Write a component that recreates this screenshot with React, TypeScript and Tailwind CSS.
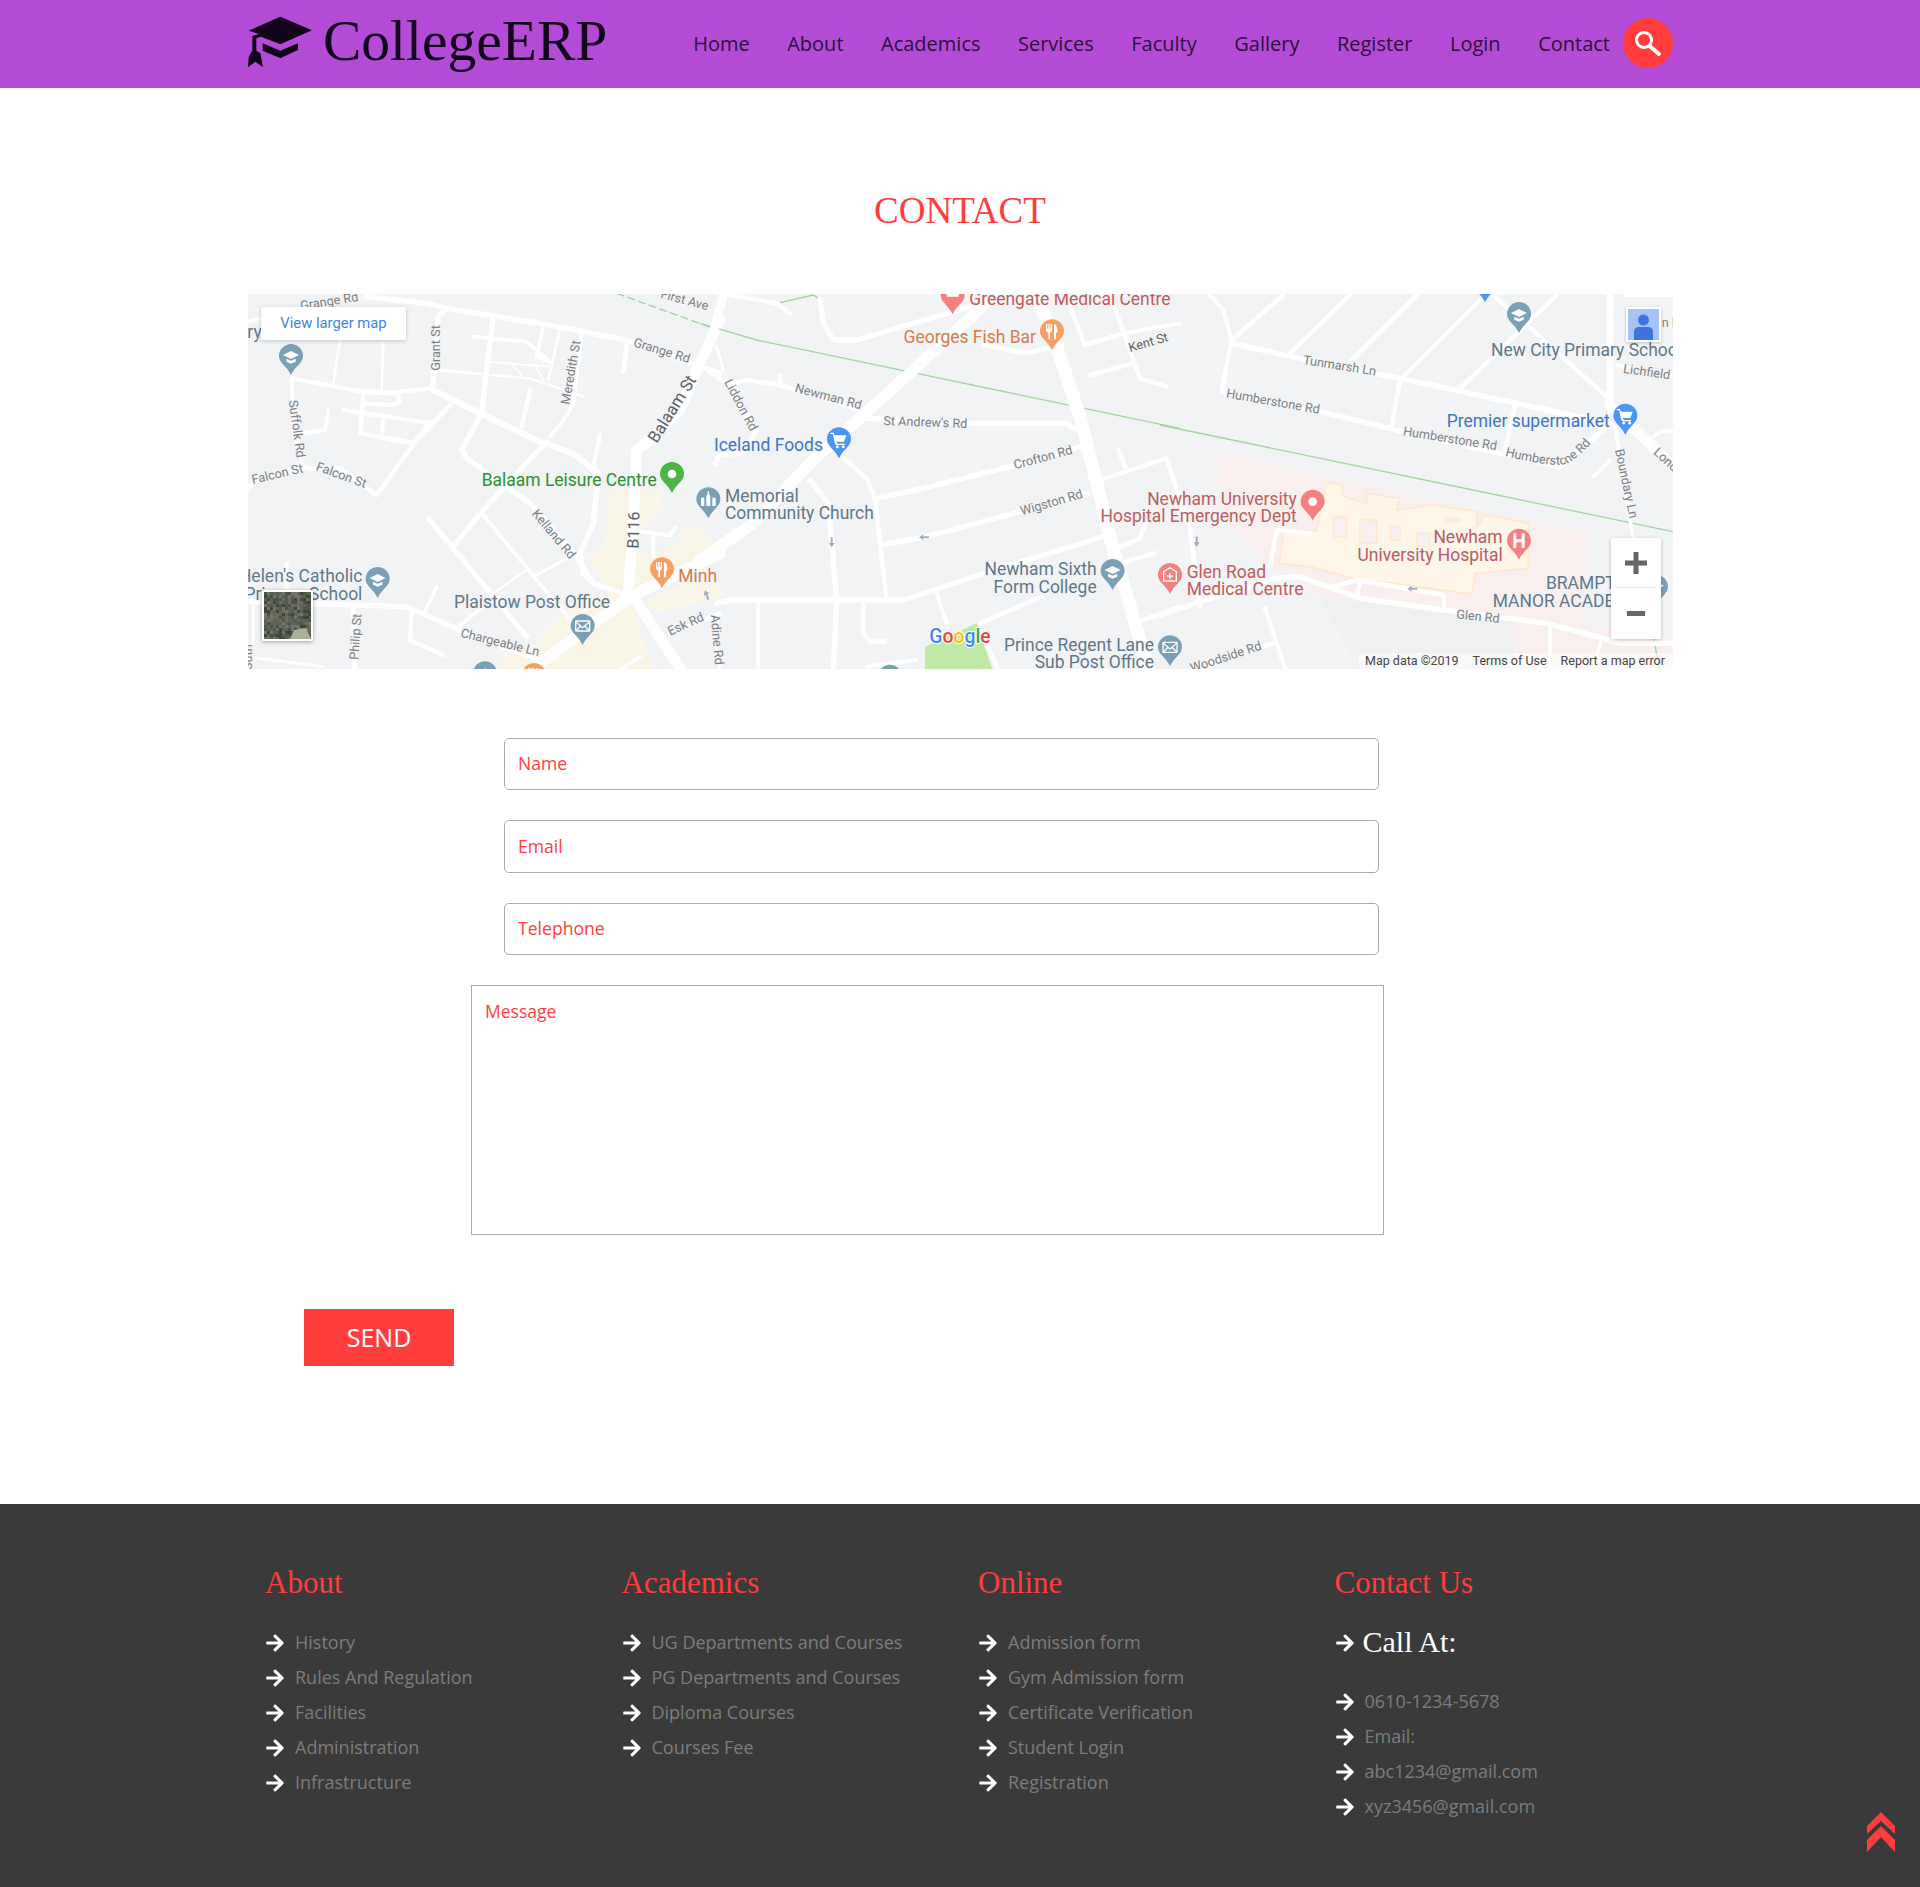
import React from "react";
import { FaArrowRight } from "react-icons/fa";

const SERIF = "font-['Liberation_Serif',serif]";

function Road({ w = 14, pts }: { w?: number; pts: string }) {
  return <polyline points={pts} fill="none" stroke="#ffffff" strokeWidth={w * 1.15} strokeLinecap="round" strokeLinejoin="round" />;
}

const C = { gray: "#5f7889", blue: "#3e76c6", green: "#2f8f2f", orange: "#d97b49", red: "#bf5c5c", road: "#7c7f83", dark: "#5c6066" };

function T({ x, y, s = 52.4, c = C.gray, r = 0, a = "start", ls = 0, children }: { x: number; y: number; s?: number; c?: string; r?: number; a?: "start" | "end"; ls?: number; children: React.ReactNode }) {
  return (
    <text x={x} y={y} fontSize={s} fill={c} textAnchor={a} letterSpacing={ls} fontFamily="Roboto, sans-serif" stroke="#f3f4f5" strokeWidth={5} paintOrder="stroke" transform={r ? `rotate(${r} ${x} ${y})` : undefined}>
      {children}
    </text>
  );
}

function Pin({ x, y, c, icon }: { x: number; y: number; c: string; icon: string }) {
  return (
    <g transform={`translate(${x} ${y})`}>
      <path d="M-36 0a36 36 0 0 1 72 0c0 22-24 30-36 57c-12-27-36-35-36-57z" fill={c} />
      {icon === "school" && <path d="M-24-3L0-15L24-3L0 9zM-14 8L0 14L14 8V17L0 23L-14 17z" fill="#fff" />}
      {icon === "dot" && <circle r="13" fill="#fff" />}
      {icon === "mail" && <g fill="none" stroke="#fff" strokeWidth="4"><rect x="-21" y="-15" width="42" height="30" rx="2" /><path d="M-21-13L0 5L21-13M-21 15L-6 0M21 15L6 0" /></g>}
      {icon === "church" && <path d="M-6-8a6 8 0 0 1 12 0V20H-6zM-22 0a5 6 0 0 1 10 0V20H-22zM12 0a5 6 0 0 1 10 0V20H12zM-2-24H2V-14H-2z" fill="#fff" />}
      {icon === "fork" && <path d="M-18-22H-14V-8H-11V-22H-7V-8H-4V-22H0V-4C0 1-4 3-6 4V24H-11V4C-14 3-18 1-18-4zM6-22C14-20 17-10 16 4H12V24H6z" fill="#fff" />}
      {icon === "cart" && <g fill="#fff"><path d="M-26-20H-16L-13-12H22L15 7H-8L-5 13H17V17H-9L-14 7L-18-16H-26z" /><circle cx="-5" cy="22" r="4.5" /><circle cx="13" cy="22" r="4.5" /></g>}
      {icon === "h" && <path d="M-17-22H-8V-4H8V-22H17V22H8V5H-8V22H-17z" fill="#fff" />}
      {icon === "house" && <g fill="none" stroke="#fff" strokeWidth="4"><path d="M-19-10L0-22L19-10V18H-19z" /><path d="M0-6V12M-9 3H9" /></g>}
      {icon === "house-top" && <path d="M-18 4V-14H-10V-20H10V-14H18V4zM-4-14V-4H4V-14z" fill="#fff" />}
    </g>
  );
}

function Arrow({ x, y, r }: { x: number; y: number; r: number }) {
  return <path transform={`translate(${x} ${y}) rotate(${r})`} d="M0-15L9-2H3V15H-3V-2H-9z" fill="#a3acc0" />;
}

function MapDrawing() {
  const G = { p: "#4b95f3", o: "#f8a062", g: "#7aa0b5", r: "#f67f80", gr: "#4db546" };
  return (
    <svg viewBox="248 294 1425 375" className="block h-[375px] w-[1425px]">
      <rect x="248" y="294" width="1425" height="375" fill="#f2f3f5" />

      <g transform="translate(240 290) scale(0.33333)">
        <g fill="#f9f5e7">
          <path d="M1120 600H1265V650L1200 720V880L1110 900L1035 800L1090 775L1105 690L1090 680z" />
          <path d="M1310 730L1370 705L1440 800L1180 890V800L1320 760z" />
          <path d="M1215 930L1400 860L1440 880V920L1240 970z" />
          <path d="M1000 940L1140 900L1180 950L1240 1140H780L790 1090L880 1060z" />
        </g>
        <path d="M1130 10L1420 115" fill="none" stroke="#9bd49b" strokeWidth="4" strokeDasharray="24 10" />
        <Road w={14} pts="380,20 560,40 620,55 900,100 1160,150 1440,250" />
        <Road w={10} pts="0,100 60,85" />
        <Road w={14} pts="620,55 595,80 578,295" />
        <Road w={16} pts="578,300 720,370 900,455 1000,490 1075,550" />
        <Road w={12} pts="155,265 370,305 470,310 480,335 460,345 370,340" />
        <Road w={12} pts="480,305 578,295" />
        <Road w={12} pts="155,265 160,420 190,530" />
        <Road w={12} pts="20,600 60,560 190,535 300,535 410,615 570,395" />
        <Road w={12} pts="310,360 570,400" />
        <Road w={10} pts="265,360 255,420 190,430" />
        <Road w={12} pts="370,310 360,430 520,460 635,340" />
        <Road w={10} pts="430,390 425,435" />
        <Road w={14} pts="760,80 735,280 725,370 665,480 680,505 800,590 870,640 1010,800 1060,880 1170,920" />
        <Road w={14} pts="920,455 730,660 640,770" />
        <Road w={14} pts="565,685 860,1040" />
        <Road w={10} pts="730,675 890,870 1000,1000" />
        <Road w={8} pts="880,860 1010,790" />
        <Road w={6} pts="860,840 760,910" />
        <Road w={7} pts="300,150 280,280" />
        <Road w={7} pts="430,160 425,300" />
        <Road w={10} pts="700,140 860,155 930,215 890,200 910,110" />
        <Road w={7} pts="960,115 925,270" />
        <Road w={5} pts="740,215 930,230" />
        <Road w={6} pts="590,240 870,265 1030,320" />
        <Road w={5} pts="820,225 850,265" />
        <Road w={5} pts="885,225 910,270" />
        <Road w={10} pts="1025,125 1000,340 975,385 930,440" />
        <Road w={12} pts="870,300 845,410" />
        <Road w={12} pts="1080,435 1060,530" />
        <Road w={12} pts="1160,165 1150,245" />
        <Road w={14} pts="1075,550 1060,700 1020,790 1030,850 1060,880" />
        <Road w={28} pts="1440,90 1370,240 1320,360 1230,450 1190,480 1180,700 1165,900" />
        <Road w={30} pts="860,1150 1170,920 1440,790" />
        <Road w={28} pts="1180,920 1330,1150" />
        <Road w={14} pts="30,935 500,950 680,1030 900,1110" />
        <Road w={12} pts="515,970 510,1050 610,1095" />
        <Road w={10} pts="590,890 555,965" />
        <Road w={10} pts="660,1005 730,950" />
        <Road w={12} pts="340,950 345,1150" />
        <Road w={12} pts="1290,1030 1440,970" />
        <Road w={12} pts="1200,725 1290,735 1305,715" />
        <Road w={10} pts="1240,735 1240,800" />
        <Road w={8} pts="20,1100 250,1130" />
        <Road w={8} pts="40,950 40,1060" />
        <Road w={10} pts="140,820 140,900" />
        <Road w={8} pts="1420,1020 1440,1140" />
        <Road w={10} pts="1125,1150 1200,1100" />
      </g>

      <g transform="translate(700 290) scale(0.33333)">
        <path d="M675 1070L830 1000L880 1145H675z" fill="#bfe8a9" />
        <polyline points="0,100 170,150 1440,415" fill="none" stroke="#a0d69c" strokeWidth="4" />
        <polyline points="240,38 340,15 355,25" fill="none" stroke="#a0d69c" strokeWidth="4" />
        <Road w={12} pts="90,15 230,40 270,70" />
        <Road w={14} pts="360,30 370,100 400,150 470,150 810,50" />
        <Road w={24} pts="70,15 40,130 0,220" />
        <Road w={8} pts="50,170 70,240" />
        <Road w={12} pts="0,225 80,280 170,420 130,490 60,495 45,520" />
        <Road w={12} pts="100,280 140,270 240,285 480,360" />
        <Road w={12} pts="240,255 240,285" />
        <Road w={14} pts="500,385 800,400 1100,400 1120,415" />
        <Road w={30} pts="0,810 160,700 340,510 640,240 880,20" />
        <Road w={34} pts="1010,15 1070,170 1140,380 1240,780 1350,1150" />
        <Road w={12} pts="850,165 980,190 1060,170" />
        <Road w={12} pts="1110,50 1155,165 1270,130" />
        <Road w={12} pts="1240,40 1320,265 1400,290" />
        <Road w={12} pts="1170,255 1300,220" />
        <Road w={10} pts="1270,130 1440,100" />
        <Road w={12} pts="430,505 500,565 525,625 560,930" />
        <Road w={14} pts="525,625 650,600 950,525 1140,470" />
        <Road w={14} pts="545,765 680,740 960,665 1165,610" />
        <Road w={14} pts="330,570 385,640 410,930 400,1150" />
        <Road w={14} pts="50,940 100,930 610,930 850,850 1210,740" />
        <Road w={12} pts="1200,570 1400,505 1470,720 1500,950" />
        <Road w={12} pts="1255,480 1275,530" />
        <Road w={12} pts="1250,775 1320,745 1335,700" />
        <Road w={12} pts="1260,820 1365,790" />
        <Road w={10} pts="175,940 175,1150" />
        <Road w={12} pts="490,940 490,1030 510,1055 555,1055" />
        <Road w={10} pts="710,910 740,1000" />
        <Road w={12} pts="840,1000 1025,920" />
        <Road w={12} pts="850,1040 900,1150" />
        <Road w={10} pts="500,1130 650,1110" />
        <Road w={12} pts="1330,990 1440,950" />
      </g>

      <g transform="translate(1160 290) scale(0.33333)">
        <path d="M165 485L1290 735L1265 1000L1540 1060V1145H1070L1060 990L480 920L340 830L200 700z" fill="#f9efee" />
        <path d="M480 920L1060 990L1065 1145H600z" fill="#eff1f0" />
        <path d="M500 578L545 585L550 620L620 640V610L720 625L710 660L815 645L950 665V710L975 675L1105 700V835L945 850L935 912L700 880L600 870L450 830L358 820L372 720L470 722z" fill="#fff6ea" stroke="#ffe8cc" strokeWidth="5" />
        <g fill="#f9efee" stroke="#ffe8cc" strokeWidth="4">
          <path d="M520 680h40v60h-40zM600 690h50v70h-50zM690 710h30v40h-30zM770 730h40v40h-40zM860 685h40v10h-40z" />
        </g>
        <polyline points="0,405 1540,725" fill="none" stroke="#a0d69c" strokeWidth="4" />
        <polyline points="1480,1040 1500,1145" fill="none" stroke="#a0d69c" strokeWidth="4" />
        <Road w={12} pts="150,15 190,60 215,150 185,300 200,310" />
        <Road w={14} pts="215,160 440,210 720,265 1350,400" />
        <Road w={14} pts="190,305 480,365 730,425 1020,490 1200,530 1340,410" />
        <Road w={12} pts="370,15 215,150" />
        <Road w={12} pts="570,15 390,190" />
        <Road w={12} pts="770,15 570,215" />
        <Road w={12} pts="975,15 725,265" />
        <Road w={12} pts="720,270 695,405" />
        <Road w={12} pts="1065,350 1035,480" />
        <Road w={12} pts="1190,15 900,295" />
        <Road w={12} pts="1000,15 1340,320" />
        <Road w={18} pts="1350,15 1350,345" />
        <Road w={28} pts="1350,345 1550,540" />
        <Road w={10} pts="1365,410 1420,750" />
        <Road w={10} pts="1300,560 1350,510" />
        <Road w={10} pts="1480,440 1500,425 1545,420" />
        <Road w={14} pts="0,975 340,865 420,860 600,925 850,960 1160,1000 1310,1040 1380,1060 1540,1060" />
        <Road w={12} pts="350,720 330,830" />
        <Road w={12} pts="350,720 450,730" />
        <Road w={10} pts="600,880 590,920" />
        <Road w={12} pts="520,890 590,870 850,915 855,960" />
        <Road w={10} pts="1170,1010 1170,1150" />
        <Road w={10} pts="1325,1040 1300,1150" />
        <Road w={12} pts="315,955 380,1150" />
        <Road w={12} pts="95,1140 340,1060" />
        <Road w={10} pts="1400,15 1540,15" />
        <Road w={10} pts="1370,225 1540,260" />
        <path id="humb" d="M1035 497Q1180 535 1225 520Q1270 490 1300 450" fill="none" />
      </g>

      <g transform="translate(240 290) scale(0.33333)">
        <T x={183} y={60} s={38} c={C.road} r={-9}>Grange Rd</T>
        <T x={22} y={143}>ry</T>
        <T x={600} y={242} s={38} c={C.road} r={-90}>Grant St</T>
        <T x={988} y={345} s={38} c={C.road} r={-80}>Meredith St</T>
        <T x={1178} y={168} s={38} c={C.road} r={17}>Grange Rd</T>
        <T x={1250} y={462} s={50} c={C.dark} r={-58}>Balaam St</T>
        <T x={146} y={332} s={38} c={C.road} r={82}>Suffolk Rd</T>
        <T x={38} y={582} s={38} c={C.road} r={-13}>Falcon St</T>
        <T x={226} y={540} s={38} c={C.road} r={20}>Falcon St</T>
        <T x={874} y={672} s={38} c={C.road} r={50}>Kelland Rd</T>
        <T x={1195} y={776} s={48} c={C.dark} r={-88}>B116</T>
        <T x={660} y={1040} s={38} c={C.road} r={14}>Chargeable Ln</T>
        <T x={355} y={1110} s={38} c={C.road} r={-86}>Philip St</T>
        <T x={35} y={1140} s={38} c={C.road} r={-90}>Suth</T>
        <T x={1290} y={1037} s={38} c={C.road} r={-24}>Esk Rd</T>
        <T x={1412} y={975} s={38} c={C.road} r={85}>Adine Rd</T>
        <T x={1260} y={23} s={38} c={C.road} r={15}>First Ave</T>
        <T x={725} y={589} c={C.green}>Balaam Leisure Centre</T>
        <T x={1315} y={875} c={C.orange}>Minh</T>
        <T x={642} y={953}>Plaistow Post Office</T>
        <T x={367} y={877} a="end">Helen's Catholic</T>
        <T x={367} y={930} a="end">Primary School</T>
        <Pin x={153} y={198} c={G.g} icon="school" />
        <Pin x={1296} y={552} c={G.gr} icon="dot" />
        <Pin x={1405} y={628} c={G.g} icon="church" />
        <Pin x={1266} y={838} c={G.o} icon="fork" />
        <Pin x={1028} y={1008} c={G.g} icon="mail" />
        <Pin x={413} y={867} c={G.g} icon="school" />
        <Pin x={735} y={1150} c={G.g} icon="school" />
        <Pin x={882} y={1155} c={G.o} icon="fork" />
        <Arrow x={1400} y={915} r={-20} />
      </g>

      <g transform="translate(700 290) scale(0.33333)">
        <T x={808} y={46} c={C.red}>Greengate Medical Centre</T>
        <T x={1008} y={160} a="end" c={C.orange}>Georges Fish Bar</T>
        <T x={1290} y={186} s={38} c="#62625a" r={-16}>Kent St</T>
        <T x={283} y={305} s={38} c={C.road} r={15}>Newman Rd</T>
        <T x={72} y={276} s={38} c={C.road} r={62}>Liddon Rd</T>
        <T x={550} y={405} s={38} c={C.road} r={2}>St Andrew's Rd</T>
        <T x={42} y={484} c={C.blue}>Iceland Foods</T>
        <T x={75} y={636}>Memorial</T>
        <T x={75} y={688}>Community Church</T>
        <T x={945} y={538} s={38} c={C.road} r={-15}>Crofton Rd</T>
        <T x={965} y={676} s={38} c={C.road} r={-16}>Wigston Rd</T>
        <T x={1190} y={855} a="end">Newham Sixth</T>
        <T x={1190} y={908} a="end">Form College</T>
        <T x={1362} y={1083} a="end">Prince Regent Lane</T>
        <T x={1362} y={1135} a="end">Sub Post Office</T>
        <Pin x={758} y={16} c={G.r} icon="house-top" />
        <Pin x={1056} y={124} c={G.o} icon="fork" />
        <Pin x={417} y={448} c={G.p} icon="cart" />
        <Pin x={1238} y={843} c={G.g} icon="school" />
        <Pin x={1410} y={1072} c={G.g} icon="mail" />
        <Pin x={1410} y={855} c={G.r} icon="house" />
        <Pin x={570} y={1160} c={G.g} icon="school" />
        <Arrow x={395} y={757} r={180} />
        <Arrow x={672} y={742} r={-90} />
        <text x={688} y={1060} fontSize={58} fontFamily="Roboto, sans-serif" fontWeight={500} stroke="#fff" strokeWidth={6} paintOrder="stroke">
          <tspan fill="#4285f4">G</tspan><tspan fill="#ea4335">o</tspan><tspan fill="#fbbc05">o</tspan><tspan fill="#4285f4">g</tspan><tspan fill="#34a853">l</tspan><tspan fill="#ea4335">e</tspan>
        </text>
      </g>

      <g transform="translate(1160 290) scale(0.33333)">
        <T x={993} y={198}>New City Primary School</T>
        <T x={1388} y={248} s={38} c={C.road} r={8}>Lichfield Rd</T>
        <T x={1505} y={110} s={38} c={C.road}>n Rd</T>
        <T x={428} y={222} s={38} c={C.road} r={9}>Tunmarsh Ln</T>
        <T x={197} y={322} s={38} c={C.road} r={10}>Humberstone Rd</T>
        <T x={728} y={436} s={38} c={C.road} r={9}>Humberstone Rd</T>
        <text fontSize={38} fill={C.road} fontFamily="Roboto, sans-serif" stroke="#f3f4f5" strokeWidth={5} paintOrder="stroke"><textPath href="#humb">Humberstone Rd</textPath></text>
        <T x={1365} y={480} s={38} c={C.road} r={78}>Boundary Ln</T>
        <T x={1478} y={490} s={38} c={C.road} r={42}>London Rd</T>
        <T x={860} y={411} c={C.blue}>Premier supermarket</T>
        <T x={410} y={645} a="end" c={C.red}>Newham University</T>
        <T x={410} y={697} a="end" c={C.red}>Hospital Emergency Dept</T>
        <T x={1028} y={760} a="end" c={C.red}>Newham</T>
        <T x={1028} y={814} a="end" c={C.red}>University Hospital</T>
        <T x={80} y={864} c={C.red}>Glen Road</T>
        <T x={80} y={916} c={C.red}>Medical Centre</T>
        <T x={1158} y={898}>BRAMPTON</T>
        <T x={998} y={950}>MANOR ACADEMY</T>
        <T x={888} y={985} s={38} c={C.road} r={6}>Glen Rd</T>
        <T x={95} y={1147} s={38} c={C.road} r={-18}>Woodside Rd</T>
        <Pin x={975} y={-20} c={G.p} icon="cart" />
        <Pin x={1077} y={72} c={G.g} icon="school" />
        <Pin x={1396} y={377} c={G.p} icon="cart" />
        <Pin x={458} y={635} c={G.r} icon="dot" />
        <Pin x={1077} y={752} c={G.r} icon="h" />
        <Pin x={1488} y={890} c={G.g} icon="school" />
        <Arrow x={110} y={755} r={180} />
        <Arrow x={757} y={896} r={-90} />
      </g>
    </svg>
  );
}

function Satellite() {
  const cells: React.ReactNode[] = [];
  const pal = ["#4a5247", "#5f6557", "#54584f", "#6d6e60", "#3d463c", "#7a7468", "#5a6352"];
  for (let y = 0; y < 16; y++) {
    for (let x = 0; x < 16; x++) {
      const i = Math.abs(Math.floor(Math.sin(x * 12.9 + y * 78.2) * 1000)) % pal.length;
      cells.push(<rect key={`${x}-${y}`} x={x * 3} y={y * 3} width="3" height="3" fill={pal[i]} />);
    }
  }
  return (
    <svg viewBox="0 0 47 47" className="block h-[47px] w-[47px]">
      {cells}
      <path d="M26 47L30 38L42 36L47 47z" fill="#a8b09a" />
    </svg>
  );
}

function GoogleMap() {
  return (
    <div className="relative h-[375px] w-[1425px] overflow-hidden">
      <MapDrawing />
      <div className="absolute left-[13px] top-[13px] flex h-[33px] w-[145px] items-center justify-center rounded-[2px] bg-white font-['Roboto',sans-serif] text-[14.8px] text-[#3f85e8] shadow-[0_1px_4px_rgba(0,0,0,0.2)]">View larger map</div>
      <div className="absolute left-[14px] top-[296px] rounded-[2px] border-2 border-white shadow-[0_1px_4px_rgba(0,0,0,0.35)]"><Satellite /></div>
      <div className="absolute left-[1378px] top-[13px] h-[35px] w-[35px] border-2 border-white bg-[#a6c3f5] shadow-[0_1px_3px_rgba(0,0,0,0.2)]">
        <svg viewBox="0 0 31 31" className="block h-[31px] w-[31px]">
          <circle cx="15.5" cy="11" r="5.5" fill="#3f74df" />
          <path d="M6 31V23Q6 18 11 18H20Q25 18 25 23V31z" fill="#3f74df" />
        </svg>
      </div>
      <div className="absolute left-[1363px] top-[244px] flex h-[101px] w-[50px] flex-col items-center rounded-[2px] bg-white shadow-[0_1px_4px_rgba(0,0,0,0.2)]">
        <div className="flex h-[50px] w-[38px] items-center justify-center border-b border-[#e6e6e6]">
          <svg viewBox="0 0 22 22" className="h-[22px] w-[22px]"><path d="M8.5 0H13.5V8.5H22V13.5H13.5V22H8.5V13.5H0V8.5H8.5z" fill="#666" /></svg>
        </div>
        <div className="flex h-[50px] items-center justify-center">
          <svg viewBox="0 0 22 6" className="h-[5px] w-[22px]"><rect width="22" height="6" fill="#666" /></svg>
        </div>
      </div>
      <div className="absolute bottom-0 right-0 flex h-[16px] w-[314px] items-center gap-[14px] bg-white/60 pl-[6px] font-['Roboto',sans-serif] text-[12.5px] leading-[16px] whitespace-nowrap text-[#444]">
        <span>Map data ©2019</span><span>Terms of Use</span><span>Report a map error</span>
      </div>
    </div>
  );
}

const NAV = ["Home", "About", "Academics", "Services", "Faculty", "Gallery", "Register", "Login", "Contact"];

function Header() {
  return (
    <header className="h-[88px] bg-[#b44bd7]">
      <div className="ml-[247px] flex h-[88px] w-[1426px] items-center justify-between">
        <div className="flex items-center gap-[10px]">
          <svg viewBox="50 48 198 156" className="-mt-[4px] h-[52px] w-[66px]">
            <path d="M150 50L245 91L150 133L92 110L78 115V152L90 160L98 202L75 185L53 202L55 170L66 152V108L85 102L55 92z" fill="#12041a" />
            <path d="M97 130L150 152L203 130V150L150 175L97 152z" fill="#12041a" />
          </svg>
          <span className={`${SERIF} -mt-[6px] text-[57.5px] leading-none text-[#12041a]`}>CollegeERP</span>
        </div>
        <div className="flex items-center gap-[13px]">
          <nav className="flex gap-[37.5px] font-['Open_Sans',sans-serif] text-[20px] text-[#2b1037]">
            {NAV.map((n) => <a key={n}>{n}</a>)}
          </nav>
          <div className="-mt-[2px] flex h-[50px] w-[50px] items-center justify-center rounded-full bg-[#ff3d3d]">
            <svg viewBox="0 0 50 50" className="h-[50px] w-[50px]">
              <circle cx="21" cy="22" r="7.5" fill="none" stroke="#fff" strokeWidth="3" />
              <path d="M26.5 28L36 36" stroke="#fff" strokeWidth="4" strokeLinecap="round" />
            </svg>
          </div>
        </div>
      </div>
    </header>
  );
}

const FIELD = "block rounded-[5px] border border-[#aaaaaa] bg-white px-[13px] pb-[2px] font-['Open_Sans',sans-serif] text-[17.6px] text-[#ff3d3d] placeholder:text-[#ff3d3d] outline-none";

function ContactForm() {
  return (
    <form className="mt-[69px]">
      <div className="ml-[504px] flex w-[875px] flex-col gap-[30px]">
        <input className={`${FIELD} h-[52px] w-full`} placeholder="Name" />
        <input className={`${FIELD} h-[53px] w-full`} placeholder="Email" />
        <input className={`${FIELD} h-[52px] w-full`} placeholder="Telephone" />
      </div>
      <textarea className="ml-[471px] mt-[30px] block h-[250px] w-[913px] resize-none border border-[#aaaaaa] bg-white px-[13px] py-[12px] font-['Open_Sans',sans-serif] text-[17.5px] text-[#ff3d3d] outline-none placeholder:text-[#ff3d3d]" placeholder="Message" />
      <button type="button" className="ml-[304px] mt-[74px] block h-[57px] w-[150px] bg-[#ff3d3d] font-['Open_Sans',sans-serif] text-[25px] text-white">SEND</button>
    </form>
  );
}

const COLS = [
  { title: "About", items: ["History", "Rules And Regulation", "Facilities", "Administration", "Infrastructure"] },
  { title: "Academics", items: ["UG Departments and Courses", "PG Departments and Courses", "Diploma Courses", "Courses Fee"] },
  { title: "Online", items: ["Admission form", "Gym Admission form", "Certificate Verification", "Student Login", "Registration"] },
];

function FooterItem({ children }: { children: React.ReactNode }) {
  return (
    <li className="flex h-[35px] items-center">
      <FaArrowRight className="mr-[10px] h-[20px] w-[20px] shrink-0 text-white" />
      <span className="font-['Open_Sans',sans-serif] text-[18px] text-[#7d7d7d]">{children}</span>
    </li>
  );
}

function Footer() {
  return (
    <footer className="relative mt-[138px] h-[384px] bg-[#3a3a3a]">
      <div className="ml-[265px] grid w-[1426px] grid-cols-4 pt-[58px]">
        {COLS.map((c) => (
          <div key={c.title}>
            <h3 className={`${SERIF} h-[42px] text-[31px] leading-[42px] text-[#ff3d3d]`}>{c.title}</h3>
            <ul className="mt-[21px]">{c.items.map((i) => <FooterItem key={i}>{i}</FooterItem>)}</ul>
          </div>
        ))}
        <div>
          <h3 className={`${SERIF} h-[42px] text-[31px] leading-[42px] text-[#ff3d3d]`}>Contact Us</h3>
          <div className="mt-[21px] flex h-[35px] items-center">
            <FaArrowRight className="mr-[8px] h-[20px] w-[20px] shrink-0 text-white" />
            <span className={`${SERIF} -mt-[2px] text-[30px] text-white`}>Call At:</span>
          </div>
          <ul className="mt-[24px]">
            {["0610-1234-5678", "Email:", "abc1234@gmail.com", "xyz3456@gmail.com"].map((i) => <FooterItem key={i}>{i}</FooterItem>)}
          </ul>
        </div>
      </div>
      <svg viewBox="0 0 28 40" className="absolute left-[1867px] top-[308px] h-[40px] w-[28px]">
        <path d="M14 0L28 14V22L14 9L0 22V14zM14 14L28 28V40L14 25L0 40V28z" fill="#ff3d3d" />
      </svg>
    </footer>
  );
}

export default function App() {
  return (
    <div className="h-[1887px] w-[1920px] overflow-hidden bg-white">
      <Header />
      <h1 className={`${SERIF} mt-[99px] h-[48px] text-center text-[37px] leading-[48px] text-[#ff3d3d]`}>CONTACT</h1>
      <div className="ml-[248px] mt-[59px]"><GoogleMap /></div>
      <ContactForm />
      <Footer />
    </div>
  );
}
